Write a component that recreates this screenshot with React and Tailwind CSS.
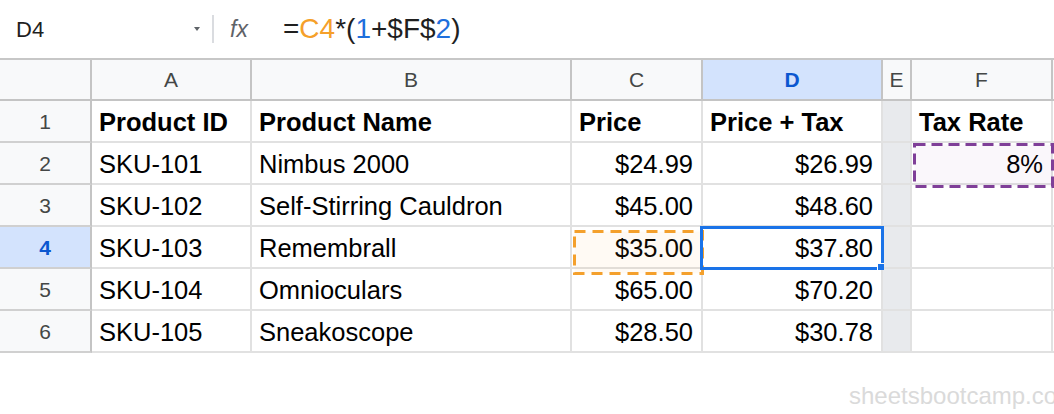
import React from 'react';

const cols = [
  { key: 'A', w: 'w-[160px]' },
  { key: 'B', w: 'w-[320px]' },
  { key: 'C', w: 'w-[131px]' },
  { key: 'D', w: 'w-[180px]' },
  { key: 'E', w: 'w-[29px]' },
  { key: 'F', w: 'w-[141px]' },
];

const rows = [
  ['Product ID', 'Product Name', 'Price', 'Price + Tax', '', 'Tax Rate'],
  ['SKU-101', 'Nimbus 2000', '$24.99', '$26.99', '', '8%'],
  ['SKU-102', 'Self-Stirring Cauldron', '$45.00', '$48.60', '', ''],
  ['SKU-103', 'Remembrall', '$35.00', '$37.80', '', ''],
  ['SKU-104', 'Omnioculars', '$65.00', '$70.20', '', ''],
  ['SKU-105', 'Sneakoscope', '$28.50', '$30.78', '', ''],
];

const FormulaBar = () => (
  <div className="flex h-[60px] items-center border-b-2 border-[#c7c7c7] bg-white">
    <div className="flex w-[212px] items-center justify-between pl-[16px] pr-[12px]">
      <span className="text-[22px] text-[#1f1f1f]">D4</span>
      <span className="h-0 w-0 border-x-[3px] border-t-[4px] border-x-transparent border-t-[#5f6368]" />
    </div>
    <div className="h-[28px] w-[2px] bg-[#dadce0]" />
    <span className="ml-[16px] w-[53px] text-[23px] italic text-[#5f6368]">fx</span>
    <div className="text-[28px] leading-none text-[#1f1f1f]">
      =<span className="text-[#f5a02a]">C4</span>*(<span className="text-[#1e6fdc]">1</span>+$F$<span className="text-[#1e6fdc]">2</span>)
    </div>
  </div>
);

const HeaderRow = () => (
  <div className="flex h-[41px] border-b-2 border-[#c4c4c4] bg-[#f8f9fa] text-[21px] text-[#444746]">
    <div className="w-[92px] shrink-0 border-r-2 border-[#c4c4c4]" />
    {cols.map((c) => (
      <div
        key={c.key}
        className={
          c.key === 'D'
            ? `${c.w} flex shrink-0 items-center justify-center border-r-2 border-[#c4c4c4] bg-[#d3e3fd] font-bold text-[#0b57d0]`
            : `${c.w} flex shrink-0 items-center justify-center border-r-2 border-[#c4c4c4]`
        }
      >
        {c.key}
      </div>
    ))}
    <div className="flex-1" />
  </div>
);

const DataRow = ({ cells, n }) => {
  const bold = n === 1;
  const active = n === 4;
  return (
    <div className="flex h-[42px]">
      <div
        className={
          active
            ? 'flex w-[92px] shrink-0 items-center justify-center border-r-2 border-b-2 border-r-[#c4c4c4] border-b-[#d0d0d0] bg-[#d3e3fd] pt-[2px] text-[21px] font-bold text-[#0b57d0]'
            : 'flex w-[92px] shrink-0 items-center justify-center border-r-2 border-b-2 border-r-[#c4c4c4] border-b-[#d0d0d0] bg-[#f8f9fa] pt-[2px] text-[21px] text-[#444746]'
        }
      >
        {n}
      </div>
      {cols.map((c, i) => {
        const v = cells[i];
        const right = !bold && (i === 2 || i === 3 || i === 5);
        return (
          <div
            key={c.key}
            className={[
              c.w,
              'flex shrink-0 items-center whitespace-nowrap border-r-2 border-b-2 border-[#e1e1e1] pt-[3px] text-[25.5px] text-black',
              right ? 'justify-end pr-[8px]' : 'pl-[7px]',
              bold ? 'font-bold' : '',
              c.key === 'E' ? 'bg-[#e8eaed]' : 'bg-white',
            ].join(' ')}
          >
            {v}
          </div>
        );
      })}
      <div className="flex-1 border-b-2 border-[#e1e1e1]" />
    </div>
  );
};

export default function App() {
  return (
    <div className="relative h-[414px] w-[1054px] overflow-hidden bg-white font-['Liberation_Sans',Arial,sans-serif]">
      <FormulaBar />
      <HeaderRow />
      {rows.map((r, i) => (
        <DataRow key={i} cells={r} n={i + 1} />
      ))}

      {/* copy range marker on C4 */}
      <svg className="absolute left-[573px] top-[230px]" width="131" height="45">
        <rect x="1.5" y="1.5" width="128" height="42" fill="rgba(246,160,45,0.05)" stroke="#f4a02c" strokeWidth="3" strokeDasharray="11 7" />
      </svg>

      {/* referenced range on F2 */}
      <svg className="absolute left-[913px] top-[143px]" width="141" height="45">
        <rect x="1.5" y="1.5" width="138" height="42" fill="rgba(127,63,152,0.04)" stroke="#7f3f98" strokeWidth="3" strokeDasharray="11 6" />
      </svg>

      {/* active cell D4 */}
      <div className="absolute left-[700px] top-[226px] h-[44px] w-[184px] border-[3px] border-[#1a73e8]">
        <div className="absolute -bottom-[3px] -right-[3px] h-[7px] w-[7px] border-l border-t border-white bg-[#1a73e8]" />
      </div>

      <div className="mt-[29px] whitespace-nowrap pl-[849px] text-[24px] leading-[28px] text-[#dadada]">
        sheetsbootcamp.com
      </div>
    </div>
  );
}
